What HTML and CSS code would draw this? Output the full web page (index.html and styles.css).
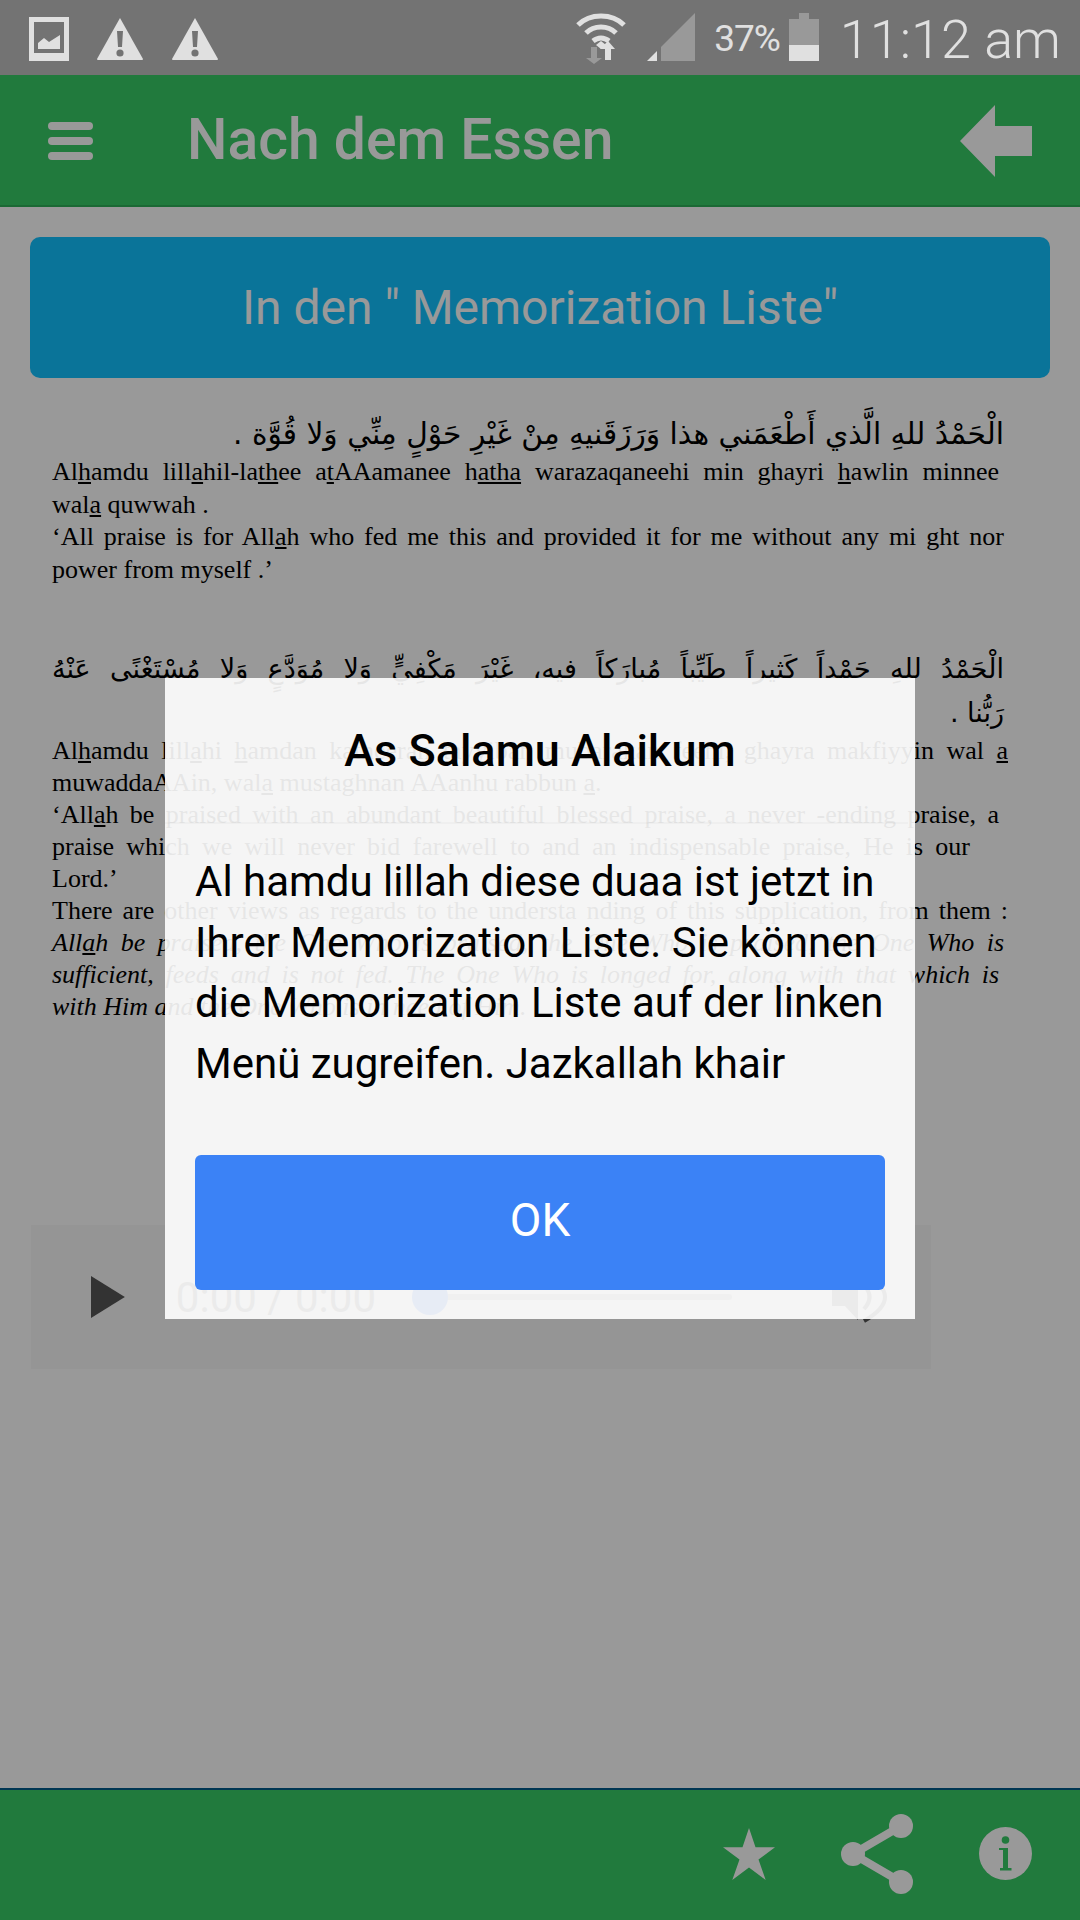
FILE: index.html
```html
<!DOCTYPE html>
<html lang="de">

<head>
    <meta charset="UTF-8">
    <meta name="viewport" content="width=device-width, initial-scale=1.0">
    <title>Nach dem Essen</title>
    <link rel="stylesheet" href="styles.css">
</head>

<body>
    <div class="status-bar">
        <div class="status-left">
            <svg width="40" height="44" viewBox="0 0 40 44">
                <path fill="#e0e0e0" fill-rule="evenodd" d="M0 0H40V44H0ZM5 5V36H35V5Z"/>
                <path fill="#e0e0e0" d="M9 32V26L15 21L20 25L31 18V32Z"/>
            </svg>
            <svg class="warn" width="48" height="44" viewBox="0 0 48 44">
                <path fill="#e0e0e0" d="M24 1L47 42Q47 43 46 43H2Q1 43 1 42Z"/>
                <path fill="#737373" d="M21 14H27L26 30H22Z"/>
                <circle fill="#737373" cx="24" cy="36" r="3.6"/>
            </svg>
            <svg class="warn" width="48" height="44" viewBox="0 0 48 44">
                <path fill="#e0e0e0" d="M24 1L47 42Q47 43 46 43H2Q1 43 1 42Z"/>
                <path fill="#737373" d="M21 14H27L26 30H22Z"/>
                <circle fill="#737373" cx="24" cy="36" r="3.6"/>
            </svg>
        </div>
        <div class="status-right">
            <svg width="50" height="54" viewBox="0 0 50 54">
                <g fill="none" stroke="#e0e0e0" stroke-width="5">
                    <path d="M2 14C14 2 36 2 48 14"/>
                    <path d="M10 22C18 14 32 14 40 22"/>
                    <path d="M17 30C22 26 28 26 33 30"/>
                </g>
                <path fill="#e0e0e0" d="M20 34L25 30L30 34L25 38Z"/>
                <path fill="#999" d="M15 36H21V47H26L18 53L10 47H15Z"/>
                <path fill="#e0e0e0" d="M29 49V38H24L32 30L39 38H35V49Z"/>
            </svg>
            <svg class="signal" width="48" height="50" viewBox="0 0 48 50">
                <path fill="#e0e0e0" d="M0 48L10 38V48Z"/>
                <path fill="#999" d="M14 34L48 0V48H14Z"/>
            </svg>
            <span class="battery-text">37%</span>
            <svg class="battery" width="30" height="50" viewBox="0 0 30 50">
                <path fill="#999" d="M10 0H20V6H30V32H0V6H10Z"/>
                <rect fill="#e0e0e0" y="32" width="30" height="16"/>
            </svg>
            <span class="clock">11:12 am</span>
        </div>
    </div>

    <div class="app">
        <div class="header">
            <div class="burger"><span></span><span></span><span></span></div>
            <div class="title">Nach dem Essen</div>
            <svg class="back" width="72" height="72" viewBox="0 0 72 72">
                <path fill="#fff" d="M35 0V21H72V51H35V72L0 36Z"/>
            </svg>
        </div>

        <div class="content">
            <div class="add-button">In den " Memorization Liste"</div>

            <div class="doc">
                <div class="arabic first">الْحَمْدُ للهِ الَّذي أَطْعَمَني هذا وَرَزَقَنيهِ مِنْ غَيْرِ حَوْلٍ مِنِّي وَلا قُوَّة .</div>
                <div class="ln w-short">Al<u>h</u>amdu lill<u>a</u>hil-la<u>th</u>ee a<u>t</u>AAamanee h<u>atha</u> warazaqaneehi min ghayri <u>h</u>awlin minnee</div>
                <div class="ln left">wal<u>a</u> quwwah .</div>
                <div class="ln">‘All praise is for All<u>a</u>h who fed me this and provided it for me without any mi ght nor</div>
                <div class="ln left">power from myself .’</div>
            </div>

            <div class="doc second">
                <div class="arabic">الْحَمْدُ للهِ حَمْداً كَثيراً طَيِّباً مُبارَكاً فيه، غَيْرَ مَكْفِيٍّ وَلا مُوَدَّعٍ وَلا مُسْتَغْنًى عَنْهُ</div>
                <div class="arabic next">رَبُّنا .</div>
                <div class="ln w-long">Al<u>h</u>amdu lill<u>a</u>hi <u>h</u>amdan katheeran <u>t</u>ayyiban mubarakan feehi, ghayra makfiyyin wal <u>a</u></div>
                <div class="ln left">muwaddaAAin, wal<u>a</u> mustaghnan AAanhu rabbun <u>a</u>.</div>
                <div class="ln w-short">‘All<u>a</u>h be praised with an abundant beautiful blessed praise, a never -ending praise, a</div>
                <div class="ln narrow">praise which we will never bid farewell to and an indispensable praise, He is our</div>
                <div class="ln left">Lord.’</div>
                <div class="ln w-long">There are other views as regards to the understa nding of this supplication, from them :</div>
                <div class="ln"><i>All<u>a</u>h be praised, the One Who is praised, the One Who is praised, the One Who is</i></div>
                <div class="ln w-short"><i>sufficient, feeds and is not fed. The One Who is longed for, along with that which is</i></div>
                <div class="ln left"><i>with Him and the One Who is in need of Him.</i></div>
            </div>

            <div class="player">
                <svg width="34" height="42" viewBox="0 0 34 42"><path fill="#555" d="M0 0L34 21L0 42Z"/></svg>
                <span class="player-time">0:00 / 0:00</span>
                <div class="player-track"><span class="player-knob"></span></div>
                <svg class="player-vol" width="56" height="52" viewBox="0 0 56 52">
                    <path fill="#555" d="M1 13H14L27 3V49L14 35H1Z"/>
                    <path fill="none" stroke="#555" stroke-width="4" d="M33 14Q44 26 33 38M33 2Q75 26 33 50"/>
                </svg>
            </div>
        </div>

        <div class="footer">
            <svg width="52" height="52" viewBox="0 0 52 52">
                <path fill="#fff" d="M26 0L32.500 19.300H52L35.500 31.500L42.700 52L26 39.500L9.300 52L16.500 31.500L0 19.300H19.500Z"/>
            </svg>
            <svg width="72" height="80" viewBox="0 0 72 80">
                <path stroke="#fff" stroke-width="8" fill="none" d="M60 12L12 40L60 68"/>
                <circle fill="#fff" cx="60" cy="12" r="12"/>
                <circle fill="#fff" cx="12" cy="40" r="12"/>
                <circle fill="#fff" cx="60" cy="68" r="12"/>
            </svg>
            <svg width="53" height="53" viewBox="0 0 53 53">
                <circle fill="#fff" cx="26.500" cy="26.500" r="26.500"/>
                <circle fill="#37cb66" cx="26.500" cy="13" r="3.800"/>
                <path fill="#37cb66" d="M20 21H29V41H32.500V43.500H21V41H24V23H20Z"/>
            </svg>
        </div>

        <div class="overlay">
            <div class="modal">
                <div class="modal-title">As Salamu Alaikum</div>
                <div class="modal-line"></div>
                <div class="modal-text">Al hamdu lillah diese duaa ist jetzt in Ihrer Memorization Liste. Sie können die Memorization Liste auf der linken Menü zugreifen. Jazkallah khair</div>
                <div class="modal-button">OK</div>
            </div>
        </div>
    </div>
</body>

</html>
```

FILE: styles.css
```css
* {
    box-sizing: border-box;
}

body {
    margin: 0;
    width: 1080px;
    height: 1920px;
    overflow: hidden;
    font-family: Roboto, sans-serif;
    background-color: #fff;
    display: flex;
    flex-direction: column;
}

.status-bar {
    height: 75px;
    background-color: #737373;
    display: flex;
    justify-content: space-between;
    align-items: center;
    padding: 0 19px 0 29px;
    color: #e0e0e0;
}

.status-left {
    display: flex;
    align-items: center;
    gap: 27px;
}

.status-left svg {
    margin-top: 2px;
}

.status-right {
    display: flex;
    align-items: center;
}

.signal {
    margin-left: 21px;
}

.battery-text {
    font-size: 37px;
    margin: 1px 0 0 19px;
    letter-spacing: -1px;
}

.battery {
    margin-left: 9px;
}

.clock {
    font-size: 54px;
    font-weight: 300;
    margin: 4px 0 0 21px;
}

.app {
    flex: 1;
    position: relative;
    display: flex;
    flex-direction: column;
}

.header {
    height: 132px;
    background-color: #37cb66;
    border-bottom: 2px solid #2db058;
    display: flex;
    align-items: center;
    padding: 0 48px;
    color: #fff;
}

.burger {
    width: 45px;
    display: flex;
    flex-direction: column;
    gap: 7px;
    margin-top: 2px;
}

.burger span {
    height: 8px;
    border-radius: 4px;
    background-color: #fff;
}

.title {
    flex: 1;
    font-size: 57px;
    font-weight: 500;
    margin-left: 94px;
    padding-bottom: 2px;
}

.back {
    margin-top: 2px;
}

.content {
    flex: 1;
    padding: 30px 30px 0;
    display: flex;
    flex-direction: column;
}

.add-button {
    height: 141px;
    border-radius: 10px;
    background-color: #12c1ff;
    color: #fff;
    font-size: 48px;
    display: flex;
    align-items: center;
    justify-content: center;
}

.doc {
    width: 952px;
    margin: 34px 0 0 22px;
    font-family: "Liberation Serif", serif;
    font-size: 26px;
    line-height: 32.500px;
    color: #000;
}

.doc.second {
    margin-top: 61px;
    line-height: 32px;
}

.arabic {
    direction: rtl;
    font-family: "DejaVu Sans", sans-serif;
    font-size: 27px;
    line-height: 44px;
    text-align: right;
    text-align-last: justify;
}

.arabic.first {
    font-size: 29.700px;
    text-align-last: right;
}

.arabic.next {
    text-align-last: right;
}

.ln {
    text-align: justify;
    text-align-last: justify;
    white-space: nowrap;
}

.ln.left {
    text-align-last: left;
}

.ln.w-short {
    width: 947px;
}

.ln.w-long {
    width: 956px;
}

.ln.narrow {
    width: 918px;
}

.player {
    width: 900px;
    height: 144px;
    margin: 202px 0 0 1px;
    background-color: #f8f8f8;
    display: flex;
    align-items: center;
    padding: 0 44px 0 60px;
}

.player-time {
    font-size: 42px;
    margin-left: 51px;
    color: #555;
    white-space: nowrap;
    flex-shrink: 0;
}

.player-track {
    width: 320px;
    height: 6px;
    margin: 0 99px 0 36px;
    background-color: #b0b0b0;
    border-radius: 3px;
    position: relative;
    flex-shrink: 0;
}

.player-knob {
    position: absolute;
    left: 0;
    top: -15px;
    width: 36px;
    height: 36px;
    border-radius: 50%;
    background-color: #1a6cff;
}

.player-vol {
    flex-shrink: 0;
}

.footer {
    height: 132px;
    background-color: #37cb66;
    border-top: 2px solid #005a8a;
    display: flex;
    align-items: center;
    justify-content: flex-end;
    gap: 66px;
    padding: 0 48px 3px 0;
}

/* dims everything below the status bar */
.overlay {
    position: absolute;
    top: 0;
    left: 0;
    right: 0;
    bottom: 0;
    padding-top: 2px;
    background-color: rgba(0, 0, 0, 0.4);
    display: flex;
    align-items: center;
    justify-content: center;
}

.modal {
    width: 750px;
    height: 641px;
    background-color: rgba(255, 255, 255, 0.9);
    padding: 43px 30px 29px;
    display: flex;
    flex-direction: column;
    color: #000;
}

.modal-title {
    font-size: 45px;
    font-weight: 500;
    text-align: center;
    line-height: 60px;
}

.modal-line {
    height: 2px;
    margin: 41px -23px 0 -30px;
    background-color: rgba(0, 0, 0, 0.025);
}

.modal-text {
    font-size: 42px;
    line-height: 60.500px;
    margin-top: 28px;
}

.modal-button {
    margin-top: auto;
    height: 135px;
    padding-bottom: 6px;
    border-radius: 6px;
    background-color: #3b82f6;
    color: #fff;
    font-size: 46px;
    display: flex;
    align-items: center;
    justify-content: center;
}
```
